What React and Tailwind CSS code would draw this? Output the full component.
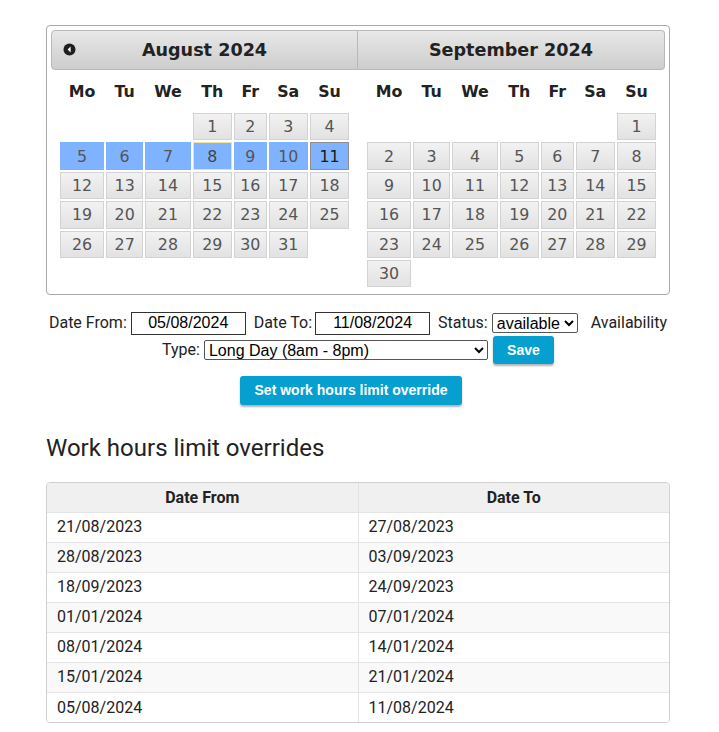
import React from "react";

const DAYS = ["Mo", "Tu", "We", "Th", "Fr", "Sa", "Su"];

const AUGUST = [
  [null, null, null, 1, 2, 3, 4],
  [5, 6, 7, 8, 9, 10, 11],
  [12, 13, 14, 15, 16, 17, 18],
  [19, 20, 21, 22, 23, 24, 25],
  [26, 27, 28, 29, 30, 31, null],
];

const SEPTEMBER = [
  [null, null, null, null, null, null, 1],
  [2, 3, 4, 5, 6, 7, 8],
  [9, 10, 11, 12, 13, 14, 15],
  [16, 17, 18, 19, 20, 21, 22],
  [23, 24, 25, 26, 27, 28, 29],
  [30, null, null, null, null, null, null],
];

const OVERRIDES = [
  ["21/08/2023", "27/08/2023"],
  ["28/08/2023", "03/09/2023"],
  ["18/09/2023", "24/09/2023"],
  ["01/01/2024", "07/01/2024"],
  ["08/01/2024", "14/01/2024"],
  ["15/01/2024", "21/01/2024"],
  ["05/08/2024", "11/08/2024"],
];

// cell look depends on where the day sits in the picked range
const dayClass = (inRange, isToday, isEnd) => {
  if (isEnd) return "bg-[#80b3ff] border-[#8f8f8f] text-[#1a1a1a]";
  if (isToday) return "bg-[#80b3ff] border-[#f5e39a] text-[#444]";
  if (inRange) return "bg-[#80b3ff] border-[#80b3ff] text-[#555]";
  return "bg-linear-to-b from-[#f2f2f2] to-[#e2e2e2] border-[#d3d3d3] text-[#555]";
};

const PrevIcon = () => (
  <svg width="13" height="13" viewBox="0 0 13 13">
    <circle cx="6.5" cy="6.5" r="6" fill="#1f1f1f" />
    <polygon points="7.6,3.6 4.6,6.5 7.6,9.4" fill="#fff" />
  </svg>
);

const MonthTable = ({ weeks, highlight }) => (
  <table className="w-[95%] mx-auto mb-[2px] border-collapse">
    <thead>
      <tr>
        {DAYS.map((d) => (
          <th
            key={d}
            className="py-[11.5px] px-[4.75px] text-center font-bold text-[15.84px] leading-[19px] text-[#222]"
          >
            {d}
          </th>
        ))}
      </tr>
    </thead>
    <tbody>
      {weeks.map((week, i) => (
        <tr key={i}>
          {week.map((day, j) => (
            <td key={j} className="p-[1px]">
              {day && (
                <a
                  className={`block border py-[3.2px] text-center text-[15.84px] leading-[19px] ${dayClass(
                    highlight && day >= 5 && day <= 11,
                    highlight && day === 8,
                    highlight && day === 11
                  )}`}
                >
                  {day}
                </a>
              )}
            </td>
          ))}
        </tr>
      ))}
    </tbody>
  </table>
);

const App = () => {
  return (
    <div className="w-[719px] min-h-[732px] bg-white font-['Roboto',sans-serif] text-[#222]">
      <div className="ml-[46px] w-[624px] pt-[25px]">
        {/* Datepicker */}
        <div className="border border-[#aaa] rounded-[4px] p-[4px] font-['DejaVu_Sans',sans-serif]">
          <div className="flex">
            <div className="flex-1">
              <div className="relative h-[40px] flex items-center justify-center border border-[#b8b8b8] rounded-l-[4px] bg-linear-to-b from-[#e8e8e8] to-[#cdcdcd]">
                <span className="absolute left-[11px] top-[12px] flex">
                  <PrevIcon />
                </span>
                <span className="font-bold text-[17.6px] text-[#222]">August 2024</span>
              </div>
              <MonthTable weeks={AUGUST} highlight />
            </div>
            <div className="flex-1">
              <div className="h-[40px] flex items-center justify-center border border-l-0 border-[#b8b8b8] rounded-r-[4px] bg-linear-to-b from-[#e8e8e8] to-[#cdcdcd]">
                <span className="font-bold text-[17.6px] text-[#222]">September 2024</span>
              </div>
              <MonthTable weeks={SEPTEMBER} />
            </div>
          </div>
        </div>

        {/* Form */}
        <div className="mt-[16px] flex justify-center items-center text-[16px] text-[#222] whitespace-nowrap">
          <span>Date From:</span>
          <input
            readOnly
            value="05/08/2024"
            className="ml-[4px] w-[115px] h-[23px] border border-[#333] text-center font-['Liberation_Sans',sans-serif] text-[16px] text-black"
          />
          <span className="ml-[8px]">Date To:</span>
          <input
            readOnly
            value="11/08/2024"
            className="ml-[3px] w-[115px] h-[23px] border border-[#333] text-center font-['Liberation_Sans',sans-serif] text-[16px] text-black"
          />
          <span className="ml-[8px]">Status:</span>
          <select
            defaultValue="available"
            className="ml-[4px] w-[86px] h-[20px] border border-[#555] rounded-[2px] font-['Liberation_Sans',sans-serif] text-[16px] text-black appearance-auto"
          >
            <option value="available">available</option>
            <option value="unavailable">unavailable</option>
          </select>
          <span className="ml-[13px]">Availability</span>
        </div>
        <div className="mt-[1px] flex justify-center items-center text-[16px] text-[#222] whitespace-nowrap">
          <span>Type:</span>
          <select
            defaultValue="long"
            className="ml-[4px] w-[284px] h-[20px] border border-[#555] rounded-[2px] font-['Liberation_Sans',sans-serif] text-[16px] text-black appearance-auto"
          >
            <option value="long">Long Day (8am - 8pm)</option>
            <option value="short">Short Day (8am - 4pm)</option>
          </select>
          <button className="ml-[5px] w-[61px] h-[28px] rounded-[3px] bg-[#05a0cf] text-white font-bold text-[14px] font-['Liberation_Sans',sans-serif] shadow-[0_2px_2px_rgba(0,0,0,0.3)]">
            Save
          </button>
        </div>
        <div className="mt-[12px] flex justify-center pr-[14px]">
          <button className="w-[222px] h-[29px] rounded-[3px] bg-[#05a0cf] text-white font-bold text-[14px] font-['Liberation_Sans',sans-serif] shadow-[0_2px_2px_rgba(0,0,0,0.3)]">
            Set work hours limit override
          </button>
        </div>

        {/* Overrides */}
        <h2 className="mt-[29px] text-[24px] leading-[29px] font-normal text-[#222]">
          Work hours limit overrides
        </h2>
        <div className="mt-[19px] border border-[#cfcfcf] rounded-[4px] overflow-hidden">
          <table className="w-full border-collapse text-[16px] text-[#222]">
            <thead>
              <tr className="bg-[#f0f0f0]">
                <th className="w-1/2 h-[29px] pt-[1px] font-bold text-center border-r border-[#e2e2e2]">Date From</th>
                <th className="w-1/2 h-[29px] pt-[1px] font-bold text-center">Date To</th>
              </tr>
            </thead>
            <tbody>
              {OVERRIDES.map(([from, to], i) => (
                <tr key={from} className={i % 2 === 1 ? "bg-[#f9f9f9]" : "bg-white"}>
                  <td className="h-[30px] pl-[10px] border-t border-r border-[#e5e5e5]">{from}</td>
                  <td className="h-[30px] pl-[10px] border-t border-[#e5e5e5]">{to}</td>
                </tr>
              ))}
            </tbody>
          </table>
        </div>
      </div>
    </div>
  );
};

export default App;
